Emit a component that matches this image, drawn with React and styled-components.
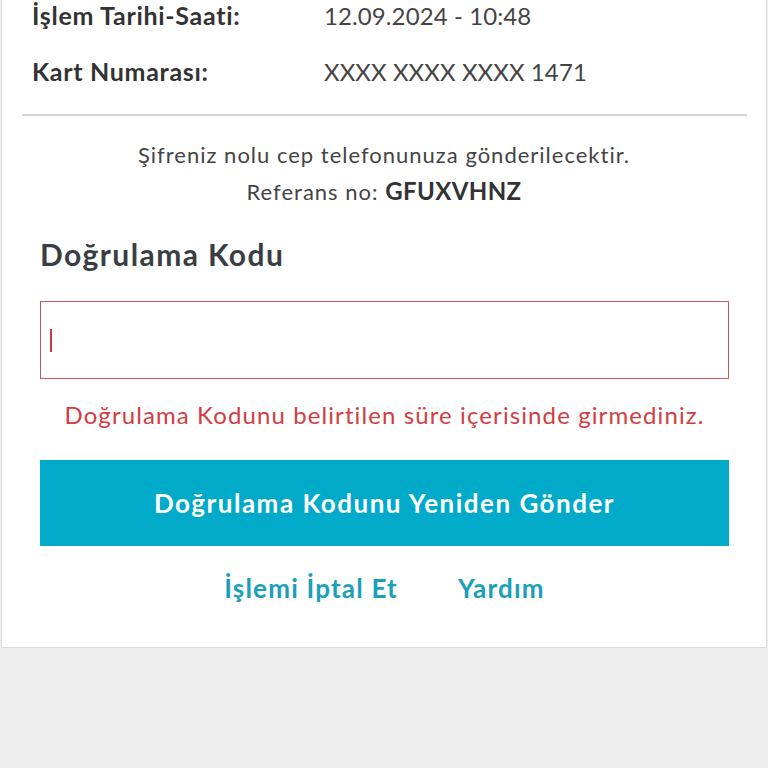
import React from "react";
import styled, { createGlobalStyle } from "styled-components";

const Global = createGlobalStyle`
  html, body { margin: 0; padding: 0; background: #eeeeee; }
  body { font-family: Lato, "Open Sans", sans-serif; }
`;

const Card = styled.div`
  background: #ffffff;
  border-left: 1px solid #dcdcdc;
  border-right: 1px solid #dcdcdc;
  border-bottom: 1px solid #dddddd;
  margin: 0 1px;
  height: 648px;
  box-sizing: border-box;
  display: flex;
  flex-direction: column;
`;

const InfoList = styled.div`
  display: flex;
  flex-direction: column;
  gap: 26px;
  padding: 0 0 0 30px;
`;

const Row = styled.div`
  display: grid;
  grid-template-columns: 292px 1fr;
  height: 30px;
  align-items: center;
  font-size: 24px;
  color: #333333;
`;

const Label = styled.span`
  font-size: 25px;
  font-weight: 700;
  letter-spacing: 0.7px;
`;

const Value = styled.span`
  font-weight: 400;
  color: #444444;
  letter-spacing: 0.1px;
`;

const Divider = styled.hr`
  border: 0;
  border-top: 2px solid #d6d6d6;
  margin: 28px 19px 0 20px;
`;

const Info = styled.p`
  margin: ${(p) => p.$mt}px 0 0;
  text-align: center;
  font-size: 22px;
  line-height: 26px;
  letter-spacing: 1px;
  color: #444444;
`;

const Ref = styled.strong`
  font-size: 24px;
  font-weight: 700;
  letter-spacing: 0.4px;
  color: #333333;
`;

const Section = styled.div`
  padding: 0 37px 0 38px;
  display: flex;
  flex-direction: column;
`;

const Heading = styled.h2`
  margin: 32px 0 0;
  font-size: 30px;
  line-height: 34px;
  font-weight: 700;
  letter-spacing: 1.4px;
  color: #3a3e43;
`;

const InputBox = styled.div`
  margin-top: 30px;
  height: 78px;
  border: 1.5px solid #c8585b;
  box-sizing: border-box;
  display: flex;
  align-items: center;
  padding-left: 9px;
`;

const Caret = styled.span`
  width: 2px;
  height: 23px;
  background: #d03a40;
`;

const ErrorText = styled.p`
  margin: 22px 0 0;
  text-align: center;
  font-size: 24px;
  line-height: 28px;
  letter-spacing: 1.1px;
  color: #d43c42;
`;

const Button = styled.button`
  margin-top: 31px;
  height: 86px;
  border: 0;
  background: #00aac8;
  color: #ffffff;
  font-family: inherit;
  font-size: 26px;
  font-weight: 700;
  letter-spacing: 1.5px;
`;

const Links = styled.div`
  margin-top: 27px;
  display: flex;
  justify-content: center;
  gap: 60px;
`;

const Link = styled.a`
  font-size: 26px;
  line-height: 30px;
  font-weight: 700;
  letter-spacing: 1.2px;
  color: #1aa0b9;
  text-decoration: none;
`;

export default function App() {
  return (
    <>
      <Global />
      <Card>
        <InfoList>
          <Row>
            <Label>İşlem Tarihi-Saati:</Label>
            <Value>12.09.2024 - 10:48</Value>
          </Row>
          <Row>
            <Label>Kart Numarası:</Label>
            <Value>XXXX XXXX XXXX 1471</Value>
          </Row>
        </InfoList>
        <Divider />
        <Info $mt={26}>Şifreniz nolu cep telefonunuza gönderilecektir.</Info>
        <Info $mt={10}>
          Referans no: <Ref>GFUXVHNZ</Ref>
        </Info>
        <Section>
          <Heading>Doğrulama Kodu</Heading>
          <InputBox>
            <Caret />
          </InputBox>
          <ErrorText>Doğrulama Kodunu belirtilen süre içerisinde girmediniz.</ErrorText>
          <Button>Doğrulama Kodunu Yeniden Gönder</Button>
          <Links>
            <Link href="#">İşlemi İptal Et</Link>
            <Link href="#">Yardım</Link>
          </Links>
        </Section>
      </Card>
    </>
  );
}
